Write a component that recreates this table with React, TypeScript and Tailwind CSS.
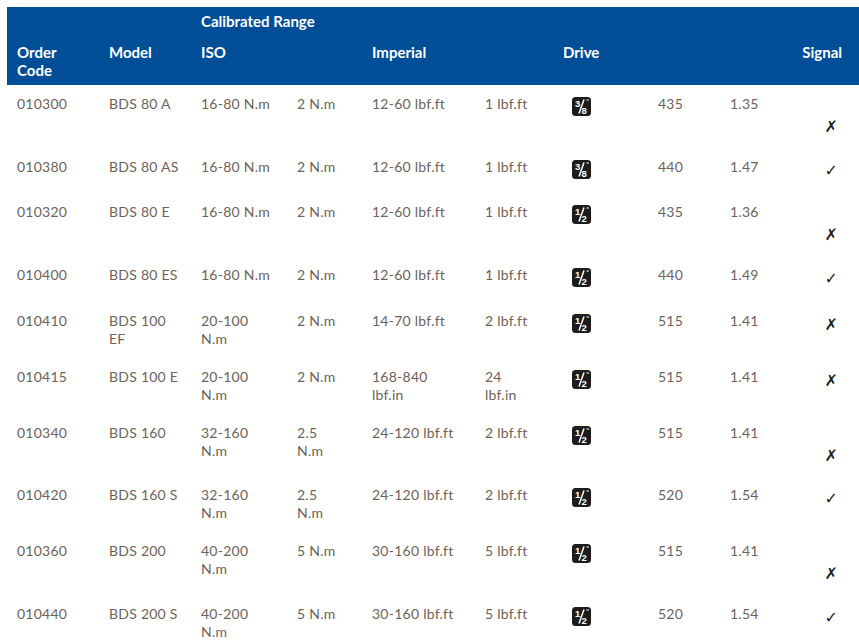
import React from "react";

type Row = {
  code: string;
  model: string[];
  iso: string[];
  isoRes: string[];
  imp: string[];
  impRes: string[];
  drive: "3/8" | "1/2";
  weight: string;
  len: string;
  signal: "x" | "check";
  low: boolean;
  h: string;
};

const rows: Row[] = [
  { code: "010300", model: ["BDS 80 A"], iso: ["16-80 N.m"], isoRes: ["2 N.m"], imp: ["12-60 lbf.ft"], impRes: ["1 lbf.ft"], drive: "3/8", weight: "435", len: "1.35", signal: "x", low: true, h: "h-[63px]" },
  { code: "010380", model: ["BDS 80 AS"], iso: ["16-80 N.m"], isoRes: ["2 N.m"], imp: ["12-60 lbf.ft"], impRes: ["1 lbf.ft"], drive: "3/8", weight: "440", len: "1.47", signal: "check", low: false, h: "h-[45px]" },
  { code: "010320", model: ["BDS 80 E"], iso: ["16-80 N.m"], isoRes: ["2 N.m"], imp: ["12-60 lbf.ft"], impRes: ["1 lbf.ft"], drive: "1/2", weight: "435", len: "1.36", signal: "x", low: true, h: "h-[63px]" },
  { code: "010400", model: ["BDS 80 ES"], iso: ["16-80 N.m"], isoRes: ["2 N.m"], imp: ["12-60 lbf.ft"], impRes: ["1 lbf.ft"], drive: "1/2", weight: "440", len: "1.49", signal: "check", low: false, h: "h-[46px]" },
  { code: "010410", model: ["BDS 100", "EF"], iso: ["20-100", "N.m"], isoRes: ["2 N.m"], imp: ["14-70 lbf.ft"], impRes: ["2 lbf.ft"], drive: "1/2", weight: "515", len: "1.41", signal: "x", low: false, h: "h-[56px]" },
  { code: "010415", model: ["BDS 100 E"], iso: ["20-100", "N.m"], isoRes: ["2 N.m"], imp: ["168-840", "lbf.in"], impRes: ["24", "lbf.in"], drive: "1/2", weight: "515", len: "1.41", signal: "x", low: false, h: "h-[56px]" },
  { code: "010340", model: ["BDS 160"], iso: ["32-160", "N.m"], isoRes: ["2.5", "N.m"], imp: ["24-120 lbf.ft"], impRes: ["2 lbf.ft"], drive: "1/2", weight: "515", len: "1.41", signal: "x", low: true, h: "h-[62px]" },
  { code: "010420", model: ["BDS 160 S"], iso: ["32-160", "N.m"], isoRes: ["2.5", "N.m"], imp: ["24-120 lbf.ft"], impRes: ["2 lbf.ft"], drive: "1/2", weight: "520", len: "1.54", signal: "check", low: false, h: "h-[56px]" },
  { code: "010360", model: ["BDS 200"], iso: ["40-200", "N.m"], isoRes: ["5 N.m"], imp: ["30-160 lbf.ft"], impRes: ["5 lbf.ft"], drive: "1/2", weight: "515", len: "1.41", signal: "x", low: true, h: "h-[63px]" },
  { code: "010440", model: ["BDS 200 S"], iso: ["40-200", "N.m"], isoRes: ["5 N.m"], imp: ["30-160 lbf.ft"], impRes: ["5 lbf.ft"], drive: "1/2", weight: "520", len: "1.54", signal: "check", low: false, h: "h-[56px]" },
];

const grid = "grid grid-cols-[92px_92px_96px_75px_113px_78px_95px_72px_70px_69px]";

function DriveIcon({ size }: { size: "3/8" | "1/2" }) {
  const [top, bottom] = size.split("/");
  return (
    <svg width="19" height="19" viewBox="0 0 19 19" className="block">
      <rect x="0" y="0" width="19" height="19" rx="3.5" fill="#1c1c1c" />
      <text x="3" y="9.5" fontSize="9.5" fontWeight="700" fill="#fff" fontFamily="Liberation Sans, sans-serif">
        {top}
      </text>
      <line x1="12" y1="2.5" x2="7" y2="16.5" stroke="#fff" strokeWidth="1.5" />
      <text x="9.5" y="17" fontSize="9.5" fontWeight="700" fill="#fff" fontFamily="Liberation Sans, sans-serif">
        {bottom}
      </text>
      <line x1="14.5" y1="3" x2="17" y2="3" stroke="#fff" strokeWidth="1" />
    </svg>
  );
}

function Lines({ lines }: { lines: string[] }) {
  return (
    <>
      {lines.map((l) => (
        <div key={l} className="whitespace-nowrap">
          {l}
        </div>
      ))}
    </>
  );
}

export default function App() {
  return (
    <div className="min-h-screen bg-white pl-[7px] pt-[7px] font-['Lato',sans-serif] text-[14px] leading-[18px] tracking-[0.25px] text-[#6e625a]">
      <div className="bg-[#004e98] pt-[5px] pb-[6px] text-[15px] font-bold tracking-normal text-white">
        <div className={grid}>
          <div className="col-start-3 col-span-4 pl-[10px] whitespace-nowrap">Calibrated Range</div>
        </div>
        <div className={`${grid} mt-[13px]`}>
          <div className="pl-[10px]">
            Order
            <br />
            Code
          </div>
          <div className="pl-[10px]">Model</div>
          <div className="pl-[10px]">ISO</div>
          <div />
          <div className="pl-[10px]">Imperial</div>
          <div />
          <div className="pl-[10px]">Drive</div>
          <div />
          <div />
          <div className="pr-[17px] text-right">Signal</div>
        </div>
      </div>

      {rows.map((r) => (
        <div key={r.code} className={`${grid} ${r.h}`}>
          <div className="pl-[10px] pt-[10px]">{r.code}</div>
          <div className="pl-[10px] pt-[10px]">
            <Lines lines={r.model} />
          </div>
          <div className="pl-[10px] pt-[10px]">
            <Lines lines={r.iso} />
          </div>
          <div className="pl-[10px] pt-[10px]">
            <Lines lines={r.isoRes} />
          </div>
          <div className="pl-[10px] pt-[10px]">
            <Lines lines={r.imp} />
          </div>
          <div className="pl-[10px] pt-[10px]">
            <Lines lines={r.impRes} />
          </div>
          <div className="pl-[19px] pt-[12px]">
            <DriveIcon size={r.drive} />
          </div>
          <div className="pl-[10px] pt-[10px]">{r.weight}</div>
          <div className="pl-[10px] pt-[10px]">{r.len}</div>
          <div
            className={`pr-[21px] text-right font-['DejaVu_Sans',sans-serif] text-[16px] leading-[18px] tracking-normal text-[#1e1e1e] ${
              r.low ? "pt-[33px]" : "pt-[14px]"
            }`}
          >
            {r.signal === "x" ? "✗" : "✓"}
          </div>
        </div>
      ))}
    </div>
  );
}
